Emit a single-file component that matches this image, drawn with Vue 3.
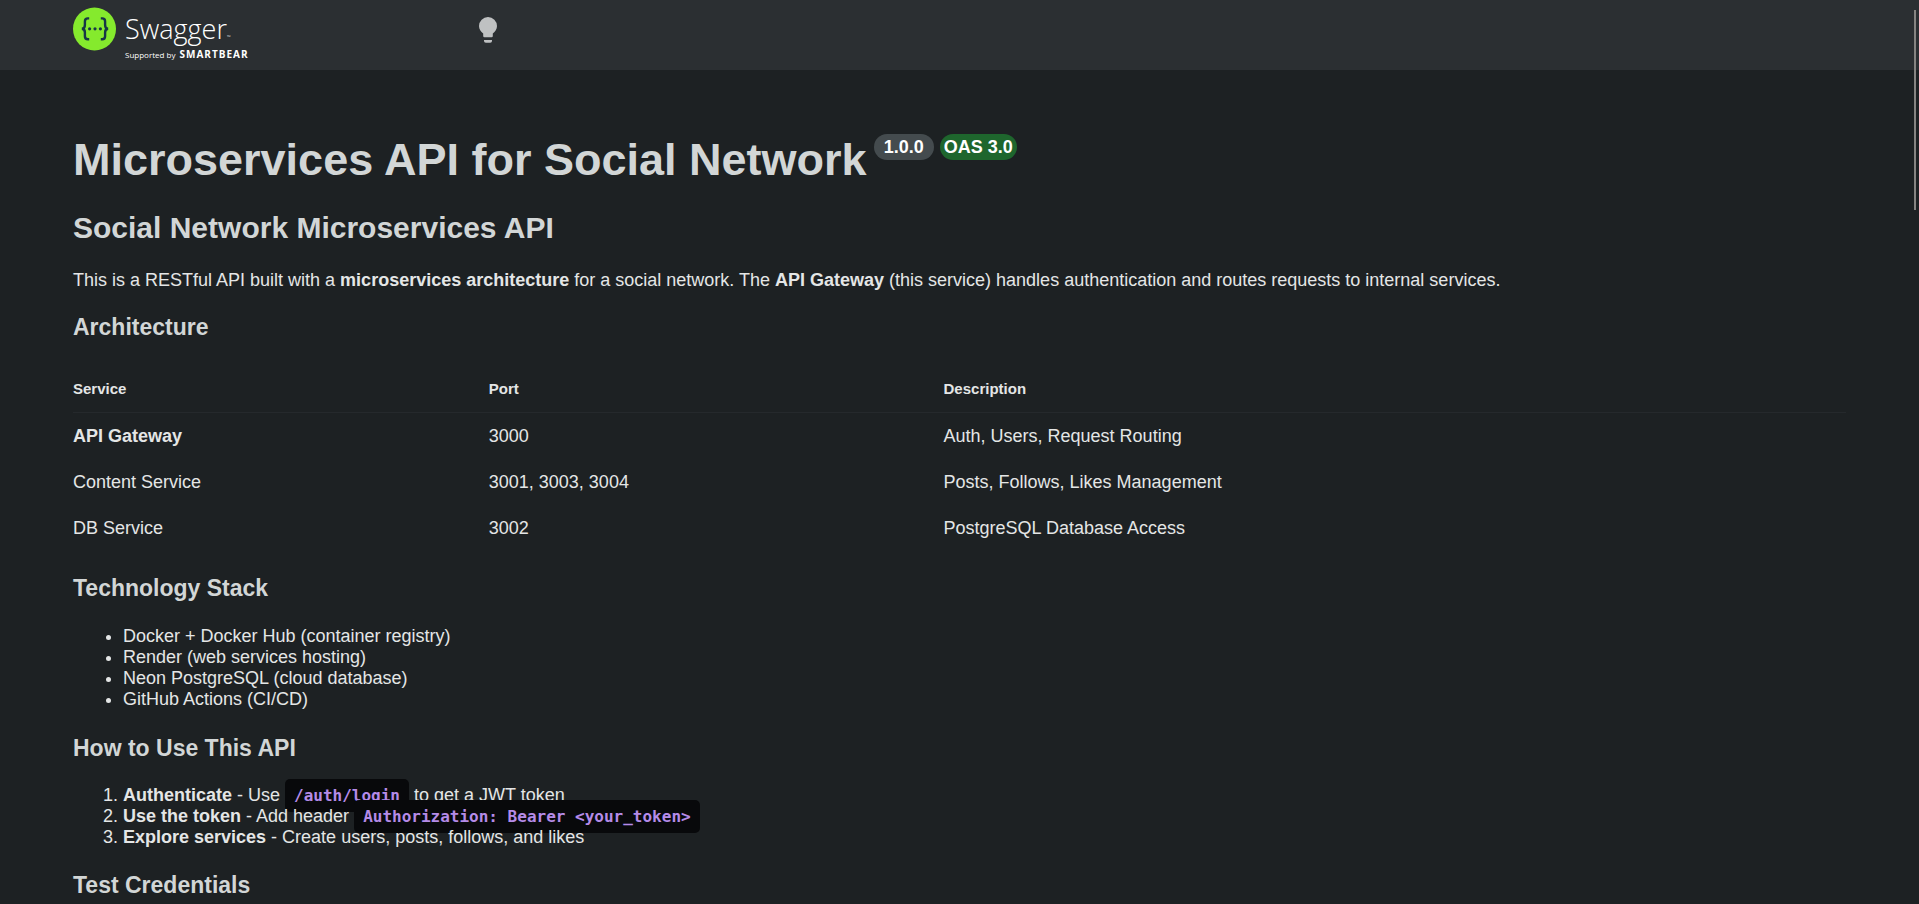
<script setup>
const services = [
  { name: 'API Gateway', port: '3000', description: 'Auth, Users, Request Routing', main: true },
  { name: 'Content Service', port: '3001, 3003, 3004', description: 'Posts, Follows, Likes Management' },
  { name: 'DB Service', port: '3002', description: 'PostgreSQL Database Access' },
]

const stack = [
  'Docker + Docker Hub (container registry)',
  'Render (web services hosting)',
  'Neon PostgreSQL (cloud database)',
  'GitHub Actions (CI/CD)',
]
</script>

<template>
  <div class="page">
    <header class="topbar">
      <div class="wrapper topbar-inner">
        <a class="brand" href="#" aria-label="Swagger">
          <svg class="mark" viewBox="0 0 44 44" aria-hidden="true">
            <circle cx="21.500" cy="22" r="21.500" fill="#85ea2d" />
            <g fill="none" stroke="#173647" stroke-width="2.4">
              <path d="M16.2 11.4h-1.4q-2.9 0-2.9 3v3.6q0 3.8-3.1 3.8q3.1 0 3.1 3.8v3.6q0 3 2.9 3h1.4" />
              <path d="M27.8 11.4h1.4q2.9 0 2.9 3v3.6q0 3.8 3.1 3.8q-3.1 0-3.1 3.8v3.6q0 3-2.9 3h-1.4" />
            </g>
            <g fill="#173647">
              <circle cx="16.6" cy="21.8" r="1.6" />
              <circle cx="22" cy="21.8" r="1.6" />
              <circle cx="27.4" cy="21.8" r="1.6" />
            </g>
          </svg>
          <span class="brand-text">
            <span class="brand-name">Swagger<span class="tm">™</span></span>
            <span class="brand-sub">Supported by <b>SMARTBEAR</b></span>
          </span>
        </a>
        <button class="theme-toggle" type="button" aria-label="Switch to light mode">
          <svg viewBox="0 0 18 26" aria-hidden="true">
            <path d="M9 0a9 9 0 0 0-9 9c0 3.400 1.800 5.800 4.200 7.400V19q0 1.200 1.200 1.200h7.200q1.200 0 1.200-1.200v-2.600C16.200 14.800 18 12.400 18 9a9 9 0 0 0-9-9z" />
            <path d="M5 23h8v1q0 1.800-1.800 1.800H6.800Q5 25.800 5 24z" />
          </svg>
        </button>
      </div>
    </header>

    <main class="wrapper content">
      <div class="title-row">
        <h1>Microservices API for Social Network</h1>
        <span class="badge">1.0.0</span>
        <span class="badge oas">OAS 3.0</span>
      </div>

      <h2>Social Network Microservices API</h2>
      <p>
        This is a RESTful API built with a <strong>microservices architecture</strong> for a social
        network. The <strong>API Gateway</strong> (this service) handles authentication and routes
        requests to internal services.
      </p>

      <h3>Architecture</h3>
      <table>
        <thead>
          <tr>
            <th class="col-service" scope="col">Service</th>
            <th class="col-port" scope="col">Port</th>
            <th scope="col">Description</th>
          </tr>
        </thead>
        <tbody>
          <tr v-for="service in services" :key="service.name">
            <td>
              <strong v-if="service.main">{{ service.name }}</strong>
              <template v-else>{{ service.name }}</template>
            </td>
            <td>{{ service.port }}</td>
            <td>{{ service.description }}</td>
          </tr>
        </tbody>
      </table>

      <h3>Technology Stack</h3>
      <ul>
        <li v-for="item in stack" :key="item">{{ item }}</li>
      </ul>

      <h3>How to Use This API</h3>
      <ol>
        <li><strong>Authenticate</strong> - Use <code>/auth/login</code> to get a JWT token</li>
        <li><strong>Use the token</strong> - Add header <code>Authorization: Bearer &lt;your_token&gt;</code></li>
        <li><strong>Explore services</strong> - Create users, posts, follows, and likes</li>
      </ol>

      <h3>Test Credentials</h3>
    </main>

    <div class="scroll-thumb"></div>
  </div>
</template>

<style>
body {
  margin: 0;
  background: #1d2022;
}
</style>

<style scoped>
.page {
  position: relative;
  height: 100vh;
  overflow: hidden;
  background: #1d2123;
  color: #e4e6e6;
  font-family: Arial, "Liberation Sans", sans-serif;
  font-size: 18px;
  line-height: 21px;
}

.wrapper {
  box-sizing: border-box;
  width: 100%;
  max-width: 1823px;
  margin: 0 auto;
  padding: 0 25px;
}

.topbar {
  background: #2b2f32;
}

.topbar-inner {
  display: flex;
  align-items: flex-start;
  height: 70px;
}

.brand {
  display: flex;
  gap: 8px;
  width: 406px;
  padding-top: 7px;
  color: #fff;
  text-decoration: none;
}

.mark {
  flex: none;
  width: 44px;
  height: 44px;
}

.brand-text {
  display: flex;
  flex-direction: column;
  padding-top: 9px;
  font-family: "Open Sans", sans-serif;
  white-space: nowrap;
}

.brand-name {
  font-size: 27px;
  font-weight: 300;
  line-height: 26px;
}

.tm {
  font-size: 5px;
}

.brand-sub {
  font-size: 8px;
  line-height: 8px;
}

.brand-sub b {
  margin-left: 2px;
  font-size: 10px;
  font-weight: 700;
  letter-spacing: 1px;
}

.theme-toggle {
  margin: 17px 0 0;
  padding: 0;
  border: 0;
  background: none;
  line-height: 0;
}

.theme-toggle svg {
  width: 18px;
  height: 26px;
  fill: #bfc1c2;
}

.title-row {
  display: flex;
  align-items: flex-start;
  margin-top: 64px;
}

h1,
h2,
h3 {
  margin: 0;
  color: #d2d6d6;
  font-weight: 700;
}

h1 {
  margin-right: 7px;
  font-size: 45px;
  line-height: 52px;
}

.badge {
  margin-right: 6px;
  padding: 0 10px;
  border-radius: 13px;
  background: #444b4e;
  color: #fff;
  font-weight: 700;
  line-height: 26px;
}

.oas {
  padding: 0 4px;
  background: #1e662d;
}

h2 {
  margin-top: 25px;
  font-size: 30px;
  line-height: 34px;
}

p {
  margin: 25px 0 23px;
}

h3 {
  font-size: 23px;
  line-height: 26px;
}

table {
  width: 100%;
  margin: 26px 0 24px;
  border-collapse: separate;
  border-spacing: 0;
}

th {
  padding: 14px 0;
  border-bottom: 1px solid #25292c;
  font-size: 15px;
  line-height: 18px;
  text-align: left;
}

td {
  padding: 13px 0 12px;
}

.col-service {
  width: 23.45%;
}

.col-port {
  width: 25.65%;
}

ul,
ol {
  margin: 25px 0;
  padding-left: 50px;
}

ol {
  margin: 24px 0;
}

code {
  padding: 7px 9px;
  border-radius: 5px;
  background: #08090b;
  color: #b58be8;
  font-family: "DejaVu Sans Mono", monospace;
  font-size: 16px;
  font-weight: 700;
}

.scroll-thumb {
  position: absolute;
  top: 10px;
  right: 3px;
  width: 2px;
  height: 200px;
  background: #868482;
}
</style>
